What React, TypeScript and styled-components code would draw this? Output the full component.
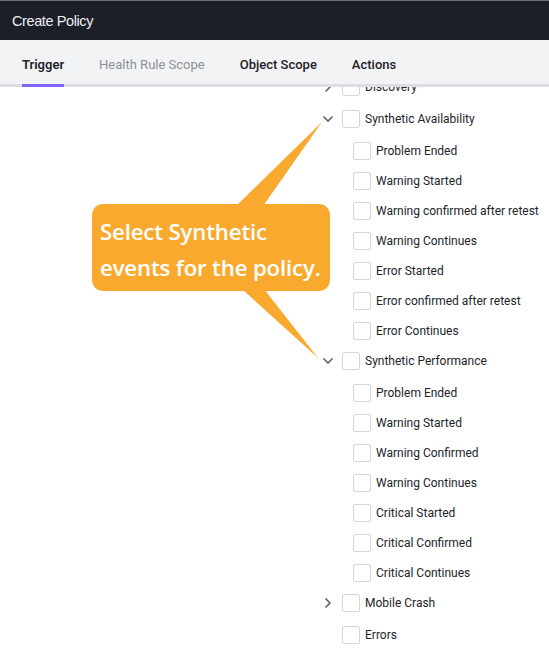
import React from "react";
import styled, { createGlobalStyle } from "styled-components";

const Global = createGlobalStyle`
  html, body { margin: 0; padding: 0; background: #ffffff; }
  body { font-family: Roboto, "Liberation Sans", Arial, sans-serif; }
  * { box-sizing: border-box; }
`;

const Page = styled.div`
  position: relative;
  width: 549px;
  height: 658px;
  overflow: hidden;
  background: #fff;
  display: flex;
  flex-direction: column;
`;

const Header = styled.header`
  height: 40px;
  flex: none;
  background: #1c1f28;
  border-top: 1px solid #6b6e75;
  display: flex;
  align-items: center;
  padding-left: 12px;
  color: #eceef2;
  font-family: "Liberation Sans", Arial, sans-serif;
  font-size: 14.5px;
  letter-spacing: -0.4px;
`;

const TabBar = styled.nav`
  height: 47px;
  flex: none;
  background: #f2f3f5;
  border-bottom: 3px solid #dcdee2;
  display: flex;
  align-items: stretch;
  padding-left: 22px;
  gap: 35px;
`;

const Tab = styled.div<{ $active?: boolean; $muted?: boolean }>`
  position: relative;
  display: flex;
  align-items: center;
  padding-top: 5px;
  font-family: Roboto, "Liberation Sans", Arial, sans-serif;
  font-size: 13px;
  font-weight: ${(p) => (p.$active ? 600 : p.$muted ? 400 : 500)};
  color: ${(p) => (p.$muted ? "#8d9199" : "#1f2228")};
  &::after {
    content: "";
    display: ${(p) => (p.$active ? "block" : "none")};
    position: absolute;
    left: 0;
    right: 0;
    bottom: -3px;
    height: 3px;
    background: #8463ff;
  }
`;

const Content = styled.main`
  flex: 1;
  overflow: hidden;
  display: flex;
  padding-left: 320px;
`;

const List = styled.ul`
  list-style: none;
  margin: -15px 0 0 0;
  padding: 0;
  display: flex;
  flex-direction: column;
`;

const ParentRow = styled.li`
  height: 32px;
  padding-bottom: 2px;
  display: flex;
  align-items: center;
`;

const ChildRow = styled.li`
  height: 30px;
  display: flex;
  align-items: center;
  padding-left: 33px;
`;

const ChevronSlot = styled.span`
  width: 16px;
  height: 16px;
  margin-right: 6px;
  display: flex;
  align-items: center;
  justify-content: center;
  color: #5f636b;
`;

const Box = styled.span`
  width: 18px;
  height: 18px;
  border: 1px solid #d3d6da;
  border-radius: 2px;
  background: #fff;
  flex: none;
  margin-right: 5px;
`;

const Label = styled.span`
  font-family: Roboto, "Liberation Sans", Arial, sans-serif;
  font-size: 12px;
  color: #222429;
  white-space: nowrap;
`;

const Callout = styled.div`
  position: absolute;
  left: 92px;
  top: 204px;
  width: 238px;
  height: 87px;
  background: #f9aa2e;
  border-radius: 11px;
  padding: 10px 0 0 8px;
  color: #ffffff;
  font-family: "Open Sans", Lato, sans-serif;
  font-weight: 600;
  font-size: 22.2px;
  line-height: 36px;
  letter-spacing: -0.15px;
  white-space: nowrap;
`;

const Tails = styled.svg`
  position: absolute;
  left: 0;
  top: 0;
  pointer-events: none;
`;

const Chevron = ({ dir }: { dir: "down" | "right" }) =>
  dir === "down" ? (
    <svg width="12" height="8" viewBox="0 0 12 8">
      <path d="M1.5 1.5 L6 6 L10.5 1.5" fill="none" stroke="currentColor" strokeWidth="1.6" />
    </svg>
  ) : (
    <svg width="8" height="12" viewBox="0 0 8 12">
      <path d="M1.5 1.5 L6 6 L1.5 10.5" fill="none" stroke="currentColor" strokeWidth="1.6" />
    </svg>
  );

type Group = {
  label: string;
  chevron?: "down" | "right";
  children?: string[];
};

const groups: Group[] = [
  { label: "Discovery", chevron: "right" },
  {
    label: "Synthetic Availability",
    chevron: "down",
    children: [
      "Problem Ended",
      "Warning Started",
      "Warning confirmed after retest",
      "Warning Continues",
      "Error Started",
      "Error confirmed after retest",
      "Error Continues",
    ],
  },
  {
    label: "Synthetic Performance",
    chevron: "down",
    children: [
      "Problem Ended",
      "Warning Started",
      "Warning Confirmed",
      "Warning Continues",
      "Critical Started",
      "Critical Confirmed",
      "Critical Continues",
    ],
  },
  { label: "Mobile Crash", chevron: "right" },
  { label: "Errors" },
];

export default function App() {
  return (
    <>
      <Global />
      <Page>
        <Header>Create Policy</Header>
        <TabBar>
          <Tab $active>Trigger</Tab>
          <Tab $muted>Health Rule Scope</Tab>
          <Tab>Object Scope</Tab>
          <Tab>Actions</Tab>
        </TabBar>
        <Content>
          <List>
            {groups.map((g) => (
              <React.Fragment key={g.label}>
                <ParentRow>
                  <ChevronSlot>{g.chevron ? <Chevron dir={g.chevron} /> : null}</ChevronSlot>
                  <Box />
                  <Label>{g.label}</Label>
                </ParentRow>
                {g.children?.map((c) => (
                  <ChildRow key={g.label + c}>
                    <Box />
                    <Label>{c}</Label>
                  </ChildRow>
                ))}
              </React.Fragment>
            ))}
          </List>
        </Content>
        <Tails width="549" height="658" viewBox="0 0 549 658">
          <polygon points="236,206 263,206 322,122" fill="#f9aa2e" />
          <polygon points="242,289 264,289 318,358" fill="#f9aa2e" />
        </Tails>
        <Callout>
          Select Synthetic
          <br />
          events for the policy.
        </Callout>
      </Page>
    </>
  );
}
